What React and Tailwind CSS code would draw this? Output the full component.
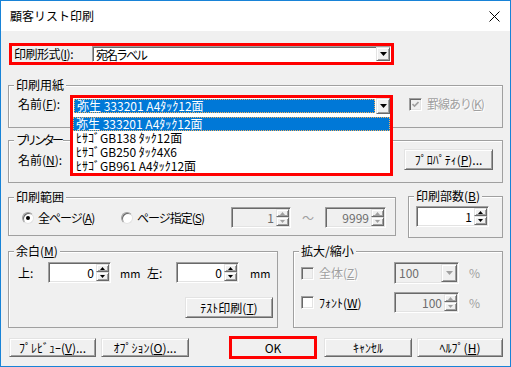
import React from "react";

const FONT = "font-['Noto_Sans_CJK_JP','Noto_Sans_CJK_SC',sans-serif]";

function U({ children }) {
  return <span className="underline underline-offset-[1px]">{children}</span>;
}

function Group({ label, className, children, labelClass = "" }) {
  return (
    <div className={`relative border border-[#a0a0a0] shadow-[inset_1px_1px_0_#ffffff] ${className}`}>
      <span className={`absolute left-[5px] top-[-8px] bg-[#f0f0f0] px-[2px] leading-[14px] whitespace-nowrap ${labelClass}`}>
        {label}
      </span>
      {children}
    </div>
  );
}

function Tri({ up, color = "#000", w = 5, h = 3 }) {
  return (
    <svg width={w} height={h} viewBox={`0 0 ${w} ${h}`} className="block">
      {up ? (
        <polygon points={`${w / 2},0 ${w},${h} 0,${h}`} fill={color} />
      ) : (
        <polygon points={`0,0 ${w},0 ${w / 2},${h}`} fill={color} />
      )}
    </svg>
  );
}

function RaisedBox({ className, children }) {
  return (
    <div
      className={`flex items-center justify-center bg-[#f0f0f0] border border-t-[#e3e3e3] border-l-[#e3e3e3] border-r-[#696969] border-b-[#696969] shadow-[inset_1px_1px_0_#ffffff,inset_-1px_-1px_0_#a0a0a0] ${className}`}
    >
      {children}
    </div>
  );
}

function Spin({ className, value, disabled }) {
  const arrow = disabled ? "#a0a0a0" : "#000";
  return (
    <div
      className={`flex border border-t-[#a0a0a0] border-l-[#a0a0a0] border-r-white border-b-white shadow-[inset_1px_1px_0_#696969,inset_-1px_-1px_0_#e3e3e3] p-[1px] ${
        disabled ? "bg-[#f0f0f0]" : "bg-white"
      } ${className}`}
    >
      <span
        className={`flex-1 text-right pr-[2px] leading-[17px] ${disabled ? "text-[#6d6d6d]" : "text-black"}`}
      >
        {value}
      </span>
      <div className="flex flex-col w-[13px]">
        <RaisedBox className="h-[8px]">
          <Tri up color={arrow} />
        </RaisedBox>
        <RaisedBox className="flex-1">
          <Tri color={arrow} />
        </RaisedBox>
      </div>
    </div>
  );
}

function Check({ checked, disabled }) {
  return (
    <span
      className={`flex items-center justify-center shrink-0 w-[13px] h-[13px] border border-t-[#a0a0a0] border-l-[#a0a0a0] border-r-white border-b-white shadow-[inset_1px_1px_0_#696969,inset_-1px_-1px_0_#e3e3e3] ${
        disabled ? "bg-[#f0f0f0]" : "bg-white"
      }`}
    >
      {checked && (
        <svg width="7" height="7" viewBox="0 0 7 7" className="block">
          <polyline points="0.5,3 2.5,5 6.5,1" fill="none" stroke={disabled ? "#a0a0a0" : "#000"} strokeWidth="1.6" />
        </svg>
      )}
    </span>
  );
}

function Radio({ checked }) {
  return (
    <span className="flex items-center justify-center shrink-0 w-[12px] h-[12px] rounded-full border border-t-[#a0a0a0] border-l-[#a0a0a0] border-r-[#e3e3e3] border-b-[#e3e3e3] bg-white shadow-[inset_1px_1px_0_#696969]">
      {checked && <span className="w-[4px] h-[4px] rounded-full bg-black" />}
    </span>
  );
}

function Btn({ className, children }) {
  return (
    <RaisedBox className={`leading-[14px] whitespace-nowrap ${className}`}>{children}</RaisedBox>
  );
}

const GRAY = "text-[#a0a0a0] [text-shadow:1px_1px_0_#ffffff]";

export default function App() {
  return (
    <div
      className={`w-[511px] h-[367px] border border-[#1883d7] bg-[#f0f0f0] text-[12px] text-black overflow-hidden ${FONT}`}
    >
      {/* Title bar */}
      <div className="h-[30px] bg-white flex items-center pl-[9px]">
        <span className="leading-[14px] text-[#000]">顧客リスト印刷</span>
        <svg className="ml-auto mr-[10px] block" width="11" height="11" viewBox="0 0 11 11">
          <path d="M0.5 0.5 L10.5 10.5 M10.5 0.5 L0.5 10.5" stroke="#000" strokeWidth="1" />
        </svg>
      </div>

      <div className="px-[7px] flex flex-col">
        {/* 印刷形式 */}
        <div className="ml-[1px] mt-[12px] w-[385px] h-[22px] border-[3px] border-[#ff0000] flex">
          <span className="w-[80px] pl-[2px] leading-[16px] whitespace-nowrap tracking-[-0.5px]">
            印刷形式(<U>I</U>):
          </span>
          <div className="flex-1 flex bg-white border border-t-[#a0a0a0] border-l-[#a0a0a0] border-r-white border-b-white shadow-[inset_1px_1px_0_#696969]">
            <span className="flex-1 pl-[3px] pt-[1px] leading-[14px] tracking-[-2px]">宛名ラベル</span>
            <RaisedBox className="w-[14px]">
              <Tri color="#000" w={7} h={4} />
            </RaisedBox>
          </div>
        </div>

        {/* 印刷用紙 */}
        <Group label="印刷用紙" className="mt-[20px] h-[43px]">
          <div className="flex items-center pt-[9px] pl-[9px]">
            <span className="w-[54px] leading-[14px] whitespace-nowrap">
              名前(<U>F</U>):
            </span>
            <div className="relative w-[318px] h-[18px]">
              <div className="absolute left-[-2px] top-0 w-[323px] h-[81px] border-[3px] border-[#ff0000] bg-white flex flex-col z-10">
                <div className="h-[16px] flex">
                  <div className="flex-1 p-[1px] bg-white">
                    <div className="h-full bg-[#0078d7] border border-dotted border-[#f0b060] text-white leading-[12px] pl-[2px] whitespace-nowrap">
                      弥生 333201 A4ﾀｯｸ12面
                    </div>
                  </div>
                  <RaisedBox className="w-[14px]">
                    <Tri color="#000" w={7} h={4} />
                  </RaisedBox>
                </div>
                <div className="h-[3px]" />
                <div className="h-[14px] bg-[#0078d7] border border-dotted border-[#f0b060] text-white leading-[12px] pl-[2px] whitespace-nowrap">
                  弥生 333201 A4ﾀｯｸ12面
                </div>
                <div className="h-[14px] leading-[14px] pl-[3px] whitespace-nowrap">ﾋｻｺﾞGB138 ﾀｯｸ12面</div>
                <div className="h-[14px] leading-[14px] pl-[3px] whitespace-nowrap">ﾋｻｺﾞGB250 ﾀｯｸ4X6</div>
                <div className="h-[14px] leading-[14px] pl-[3px] whitespace-nowrap">ﾋｻｺﾞGB961 A4ﾀｯｸ12面</div>
              </div>
            </div>
            <div className="flex items-center ml-[19px]">
              <Check checked disabled />
              <span className={`ml-[5px] leading-[14px] whitespace-nowrap tracking-[-1px] ${GRAY}`}>
                罫線あり(<U>K</U>)
              </span>
            </div>
          </div>
        </Group>

        {/* プリンター */}
        <Group label="プリンター" labelClass="tracking-[-3px]" className="mt-[12px] h-[43px]">
          <div className="flex items-center pt-[8px] pl-[9px]">
            <span className="w-[54px] leading-[14px] whitespace-nowrap">
              名前(<U>N</U>):
            </span>
            <div className="w-[318px] h-[20px] bg-white" />
            <Btn className="ml-[14px] w-[89px] h-[21px]">
              ﾌﾟﾛﾊﾟﾃｨ(<U>P</U>)...
            </Btn>
          </div>
        </Group>

        {/* 印刷範囲 / 印刷部数 */}
        <div className="flex items-start gap-[12px] mt-[13px]">
          <Group label="印刷範囲" className="mt-[1px] w-[388px] h-[39px]">
            <div className="flex items-center h-[21px] mt-[9px] pl-[13px]">
              <div className="flex items-center w-[99px]">
                <Radio checked />
                <span className="ml-[4px] leading-[14px] whitespace-nowrap tracking-[-1px]">
                  全ページ(<U>A</U>)
                </span>
              </div>
              <div className="flex items-center w-[110px]">
                <Radio />
                <span className="ml-[4px] leading-[14px] whitespace-nowrap tracking-[-1px]">
                  ページ指定(<U>S</U>)
                </span>
              </div>
              <Spin className="w-[60px] h-[21px]" value="1" disabled />
              <span className="w-[34px] text-center text-[#a0a0a0] leading-[14px]">～</span>
              <Spin className="w-[61px] h-[21px]" value="9999" disabled />
            </div>
          </Group>
          <Group
            label={
              <>
                印刷部数(<U>B</U>)
              </>
            }
            className="w-[95px] h-[42px]"
          >
            <div className="pt-[9px] pl-[7px]">
              <Spin className="w-[73px] h-[21px]" value="1" />
            </div>
          </Group>
        </div>

        {/* 余白 / 拡大縮小 */}
        <div className="flex gap-[15px] mt-[13px]">
          <Group
            label={
              <>
                余白(<U>M</U>)
              </>
            }
            className="w-[270px] h-[77px]"
          >
            <div className="pt-[10px] pl-[9px]">
              <div className="flex items-center h-[21px]">
                <span className="w-[30px] leading-[14px]">上:</span>
                <Spin className="w-[63px] h-[21px]" value="0" />
                <span className="w-[36px] pl-[9px] text-[11px] leading-[14px]">mm</span>
                <span className="w-[29px] leading-[14px]">左:</span>
                <Spin className="w-[63px] h-[21px]" value="0" />
                <span className="ml-[11px] text-[11px] leading-[14px]">mm</span>
              </div>
              <Btn className="mt-[14px] ml-[167px] w-[88px] h-[21px]">
                ﾃｽﾄ印刷(<U>T</U>)
              </Btn>
            </div>
          </Group>
          <Group label="拡大/縮小" className="w-[210px] h-[77px]">
            <div className="pt-[10px] pl-[7px]">
              <div className="flex items-center h-[22px]">
                <div className="flex items-center w-[93px]">
                  <Check disabled />
                  <span className={`ml-[5px] leading-[14px] whitespace-nowrap ${GRAY}`}>
                    全体(<U>Z</U>)
                  </span>
                </div>
                <div className="w-[65px] h-[22px] flex border border-t-[#a0a0a0] border-l-[#a0a0a0] border-r-white border-b-white shadow-[inset_1px_1px_0_#696969,inset_-1px_-1px_0_#e3e3e3] p-[1px] bg-[#f0f0f0]">
                  <span className="flex-1 pl-[3px] leading-[18px] text-[#6d6d6d]">100</span>
                  <RaisedBox className="w-[16px]">
                    <Tri color="#a0a0a0" w={7} h={4} />
                  </RaisedBox>
                </div>
                <span className="ml-[10px] leading-[14px] text-[#a0a0a0]">%</span>
              </div>
              <div className="flex items-center h-[21px] mt-[8px]">
                <div className="flex items-center w-[93px]">
                  <Check />
                  <span className="ml-[5px] leading-[14px] whitespace-nowrap">
                    ﾌｫﾝﾄ(<U>W</U>)
                  </span>
                </div>
                <Spin className="w-[65px] h-[21px]" value="100" disabled />
                <span className="ml-[10px] leading-[14px] text-[#a0a0a0]">%</span>
              </div>
            </div>
          </Group>
        </div>

        {/* Bottom buttons */}
        <div className="flex items-center mt-[8px] h-[23px]">
          <Btn className="ml-[1px] w-[87px] h-[19px]">
            ﾌﾟﾚﾋﾞｭｰ(<U>V</U>)...
          </Btn>
          <Btn className="ml-[5px] w-[88px] h-[19px]">
            ｵﾌﾟｼｮﾝ(<U>O</U>)...
          </Btn>
          <div className="ml-[40px] w-[88px] h-[23px] border-[3px] border-[#ff0000] flex items-center justify-center leading-[14px]">
            OK
          </div>
          <Btn className="ml-[7px] w-[88px] h-[19px]">ｷｬﾝｾﾙ</Btn>
          <Btn className="ml-[5px] w-[86px] h-[19px]">
            ﾍﾙﾌﾟ(<U>H</U>)
          </Btn>
        </div>
      </div>
    </div>
  );
}
